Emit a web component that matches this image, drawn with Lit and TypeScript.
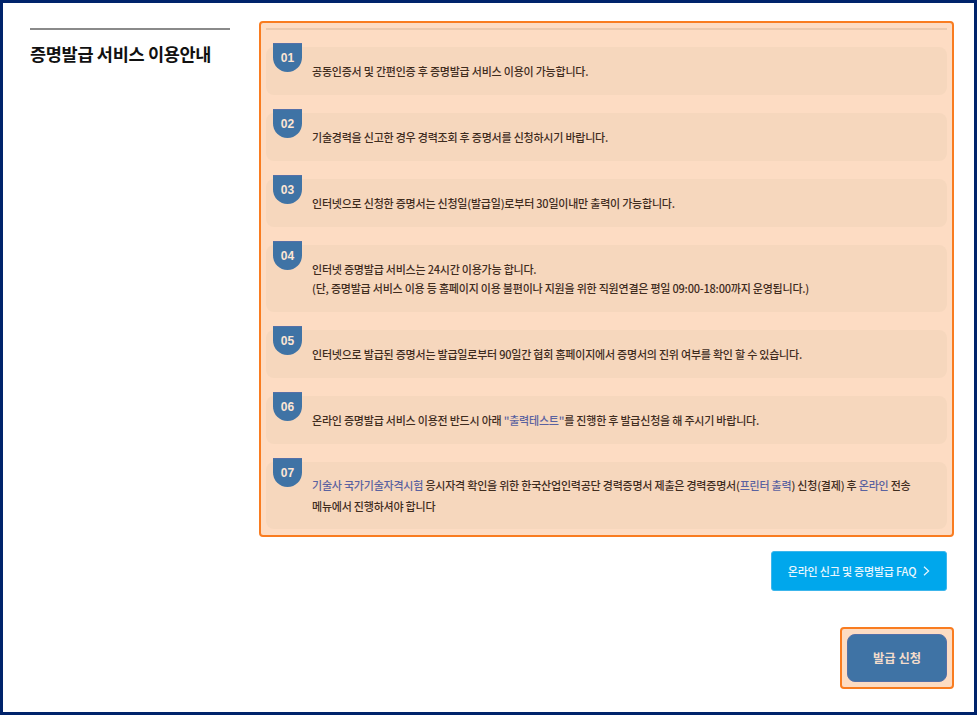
import { LitElement, html, css } from "lit";
import { customElement } from "lit/decorators.js";

@customElement("app-root")
export class AppRoot extends LitElement {
  static styles = css`
    :host {
      display: block;
      width: 977px;
      height: 715px;
      box-sizing: border-box;
      border: 3px solid #00236b;
      background: #fff;
      font-family: "Noto Sans CJK KR", "Noto Sans", sans-serif;
      color: #222;
      overflow: hidden;
    }
    .page {
      display: grid;
      grid-template-columns: 200px 695px;
      column-gap: 29px;
      padding: 18px 0 0 27px;
    }
    .side {
      padding-top: 7px;
    }
    .side h2 {
      margin: 0;
      border-top: 2px solid #8a8a8a;
      padding-top: 10px;
      font-size: 17.5px;
      line-height: 27px;
      font-weight: 700;
      color: #111;
      letter-spacing: -0.3px;
    }
    .main {
      display: flex;
      flex-direction: column;
      align-items: flex-end;
    }
    .panel {
      box-sizing: border-box;
      width: 695px;
      height: 516px;
      border: 2px solid #f97c20;
      border-radius: 4px;
      background: #fddcc3;
      padding: 5px 5px 0;
      display: flex;
      flex-direction: column;
    }
    .rule {
      flex: none;
      height: 2px;
      background: #ebc9ae;
      margin-bottom: 17px;
    }
    .row {
      flex: none;
      position: relative;
      background: #f6d7bd;
      border-radius: 8px;
      padding: 14.5px 20px 14.5px 46px;
      margin-bottom: 18px;
      font-size: 11px;
      letter-spacing: -0.22px;
      line-height: 19px;
      color: #3f2c1e;
      font-weight: 500;
    }
    .row p {
      margin: 0;
    }
    .row.wide {
      padding-top: 12.5px;
      padding-bottom: 12.5px;
      line-height: 21px;
    }
    .badge {
      position: absolute;
      left: 7px;
      top: -4px;
      width: 29px;
      height: 29px;
      box-sizing: border-box;
      background: #3f73a5;
      border-top: 1px solid #5670a8;
      border-radius: 0 0 14.5px 14.5px;
      color: #fde6d4;
      font-family: "Liberation Sans", Arial, sans-serif;
      font-weight: 700;
      font-size: 12px;
      letter-spacing: 0;
      line-height: 28px;
      text-align: center;
    }
    .link {
      color: #5a62a0;
    }
    .faq {
      box-sizing: border-box;
      margin: 14px 7px 0 0;
      width: 176px;
      height: 40px;
      background: #00a7ec;
      border: 1px solid #3cb6ec;
      border-radius: 3px;
      color: #e8f6fd;
      font-family: inherit;
      font-size: 11px;
      letter-spacing: -0.2px;
      font-weight: 500;
      display: flex;
      align-items: center;
      justify-content: center;
      gap: 7px;
      padding: 0;
    }
    .faq svg {
      display: block;
    }
    .apply-wrap {
      box-sizing: border-box;
      margin-top: 36px;
      width: 114px;
      height: 62px;
      padding: 5px;
      border: 2px solid #f97c20;
      border-radius: 4px;
      background: #fddcc3;
    }
    .apply {
      box-sizing: border-box;
      width: 100%;
      height: 100%;
      background: #3f73a5;
      border: 1px solid #5670a8;
      border-radius: 8px;
      color: #f3dccb;
      font-family: inherit;
      font-size: 12.3px;
      font-weight: 700;
      padding: 0;
    }
  `;

  private row(n: string, body: unknown, wide = false) {
    return html`<div class="row ${wide ? "wide" : ""}">
      <span class="badge">${n}</span>${body}
    </div>`;
  }

  render() {
    return html`<div class="page">
      <aside class="side"><h2>증명발급 서비스 이용안내</h2></aside>
      <section class="main">
        <div class="panel">
          <div class="rule"></div>
          ${this.row("01", html`<p>공동인증서 및 간편인증 후 증명발급 서비스 이용이 가능합니다.</p>`)}
          ${this.row("02", html`<p>기술경력을 신고한 경우 경력조회 후 증명서를 신청하시기 바랍니다.</p>`)}
          ${this.row("03", html`<p>인터넷으로 신청한 증명서는 신청일(발급일)로부터 30일이내만 출력이 가능합니다.</p>`)}
          ${this.row("04", html`<p>인터넷 증명발급 서비스는 24시간 이용가능 합니다.</p>
            <p>(단, 증명발급 서비스 이용 등 홈페이지 이용 불편이나 지원을 위한 직원연결은 평일 09:00-18:00까지 운영됩니다.)</p>`)}
          ${this.row("05", html`<p>인터넷으로 발급된 증명서는 발급일로부터 90일간 협회 홈페이지에서 증명서의 진위 여부를 확인 할 수 있습니다.</p>`)}
          ${this.row("06", html`<p>온라인 증명발급 서비스 이용전 반드시 아래 <span class="link">"출력테스트"</span>를 진행한 후 발급신청을 해 주시기 바랍니다.</p>`)}
          ${this.row("07", html`<p><span class="link">기술사 국가기술자격시험</span> 응시자격 확인을 위한 한국산업인력공단 경력증명서 제출은 경력증명서(<span class="link">프린터 출력</span>) 신청(결제) 후 <span class="link">온라인</span> 전송<br />메뉴에서 진행하셔야 합니다</p>`, true)}
        </div>
        <button class="faq">
          온라인 신고 및 증명발급 FAQ
          <svg width="7" height="10" viewBox="0 0 7 10" fill="none" stroke="#e8f6fd" stroke-width="1.2">
            <path d="M1 0.8 L5.6 5 L1 9.2" />
          </svg>
        </button>
        <div class="apply-wrap"><button class="apply">발급 신청</button></div>
      </section>
    </div>`;
  }
}
